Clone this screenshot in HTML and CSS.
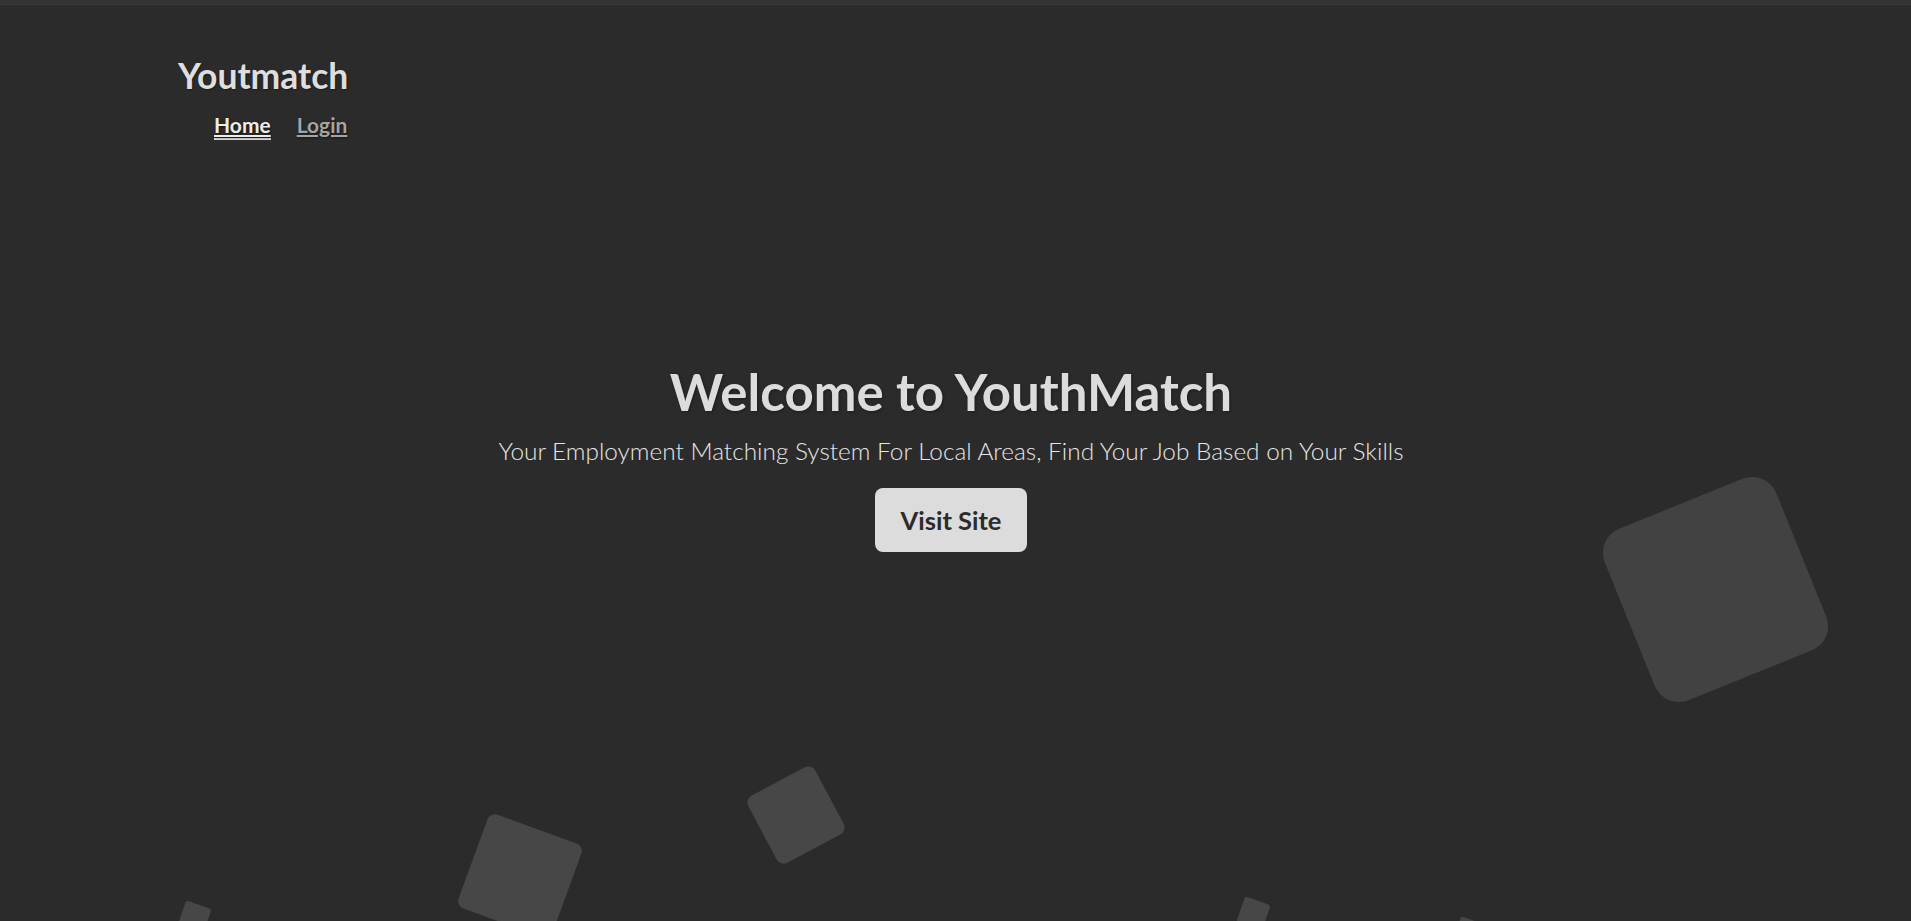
FILE: index.html
```html
<!DOCTYPE html>
<html lang="en">
<head>
<meta charset="utf-8">
<title>Youtmatch</title>
<link rel="stylesheet" href="styles.css">
</head>
<body>
<div class="topbar"></div>
<div class="bg-shapes" aria-hidden="true">
  <span class="shape shape-lg"></span>
  <span class="shape shape-md"></span>
  <span class="shape shape-sm"></span>
  <span class="shape shape-xs s1"></span>
  <span class="shape shape-xs s2"></span>
  <span class="shape shape-xs s3"></span>
</div>
<header class="site-header">
  <div class="logo">Youtmatch</div>
  <nav class="nav">
    <a href="#" class="nav-link active">Home</a>
    <a href="#" class="nav-link">Login</a>
  </nav>
</header>
<main class="hero">
  <h1 class="hero-title">Welcome to YouthMatch</h1>
  <p class="hero-sub">Your Employment Matching System For Local Areas, Find Your Job Based on Your Skills</p>
  <a href="#" class="btn">Visit Site</a>
</main>
</body>
</html>
```
FILE: styles.css
```css
html, body {
  margin: 0;
  padding: 0;
  height: 100%;
}
body {
  background: #2b2b2b;
  font-family: Lato, "Open Sans", sans-serif;
  color: #dcdcdc;
  overflow: hidden;
  position: relative;
}
.topbar {
  height: 4px;
  background: #333333;
  border-bottom: 1px solid #3b3b3b;
}
.bg-shapes {
  position: absolute;
  inset: 0;
  overflow: hidden;
  pointer-events: none;
  z-index: 0;
}
.shape {
  position: absolute;
  display: block;
  background: #474747;
}
.shape-lg {
  left: 1623px;
  top: 497px;
  width: 185px;
  height: 185px;
  border-radius: 26px;
  background: #424242;
  transform: rotate(-22deg);
}
.shape-md {
  left: 758px;
  top: 777px;
  width: 76px;
  height: 76px;
  border-radius: 8px;
  transform: rotate(-28deg);
}
.shape-sm {
  left: 470px;
  top: 826px;
  width: 100px;
  height: 100px;
  border-radius: 8px;
  transform: rotate(20deg);
}
.shape-xs {
  width: 27px;
  height: 27px;
  border-radius: 3px;
  transform: rotate(19deg);
}
.s1 { left: 181px; top: 904px; }
.s2 { left: 1240px; top: 900px; }
.s3 { left: 1456px; top: 920px; }

.site-header {
  position: relative;
  z-index: 1;
  padding: 50px 0 0 178px;
}
.logo {
  font-size: 35.5px;
  line-height: 1.2;
  font-weight: 700;
  color: #dedede;
  text-shadow: 1px 1px 2px rgba(0,0,0,0.35);
}
.nav {
  display: flex;
  gap: 26px;
  padding-left: 36px;
  margin-top: 14px;
}
.nav-link {
  font-size: 21px;
  line-height: 1.2;
  font-weight: 700;
  color: #a4a4a4;
  text-decoration: underline;
  text-underline-offset: 2px;
  text-shadow: 1px 1px 2px rgba(0,0,0,0.5);
}
.nav-link.active {
  color: #ececec;
  border-bottom: 2px solid #dcdcdc;
  padding-bottom: 1px;
}
.hero {
  position: relative;
  z-index: 1;
  display: flex;
  flex-direction: column;
  align-items: center;
  text-align: center;
  padding-top: 221px;
  padding-right: 9px;
}
.hero-title {
  margin: 0;
  font-size: 51px;
  line-height: 1.2;
  font-weight: 700;
  color: #dcdcdc;
  text-shadow: 1px 1px 3px rgba(0,0,0,0.35);
}
.hero-sub {
  margin: 14px 0 0;
  font-size: 24.4px;
  line-height: 1.2;
  font-weight: 300;
  color: #e6e6e6;
}
.btn {
  margin-top: 23px;
  display: inline-block;
  padding: 17px 26px 17px;
  font-size: 25.5px;
  line-height: 30px;
  font-weight: 700;
  color: #2b2b2b;
  background: #dcdcdc;
  border-radius: 8px;
  text-decoration: none;
}
```
